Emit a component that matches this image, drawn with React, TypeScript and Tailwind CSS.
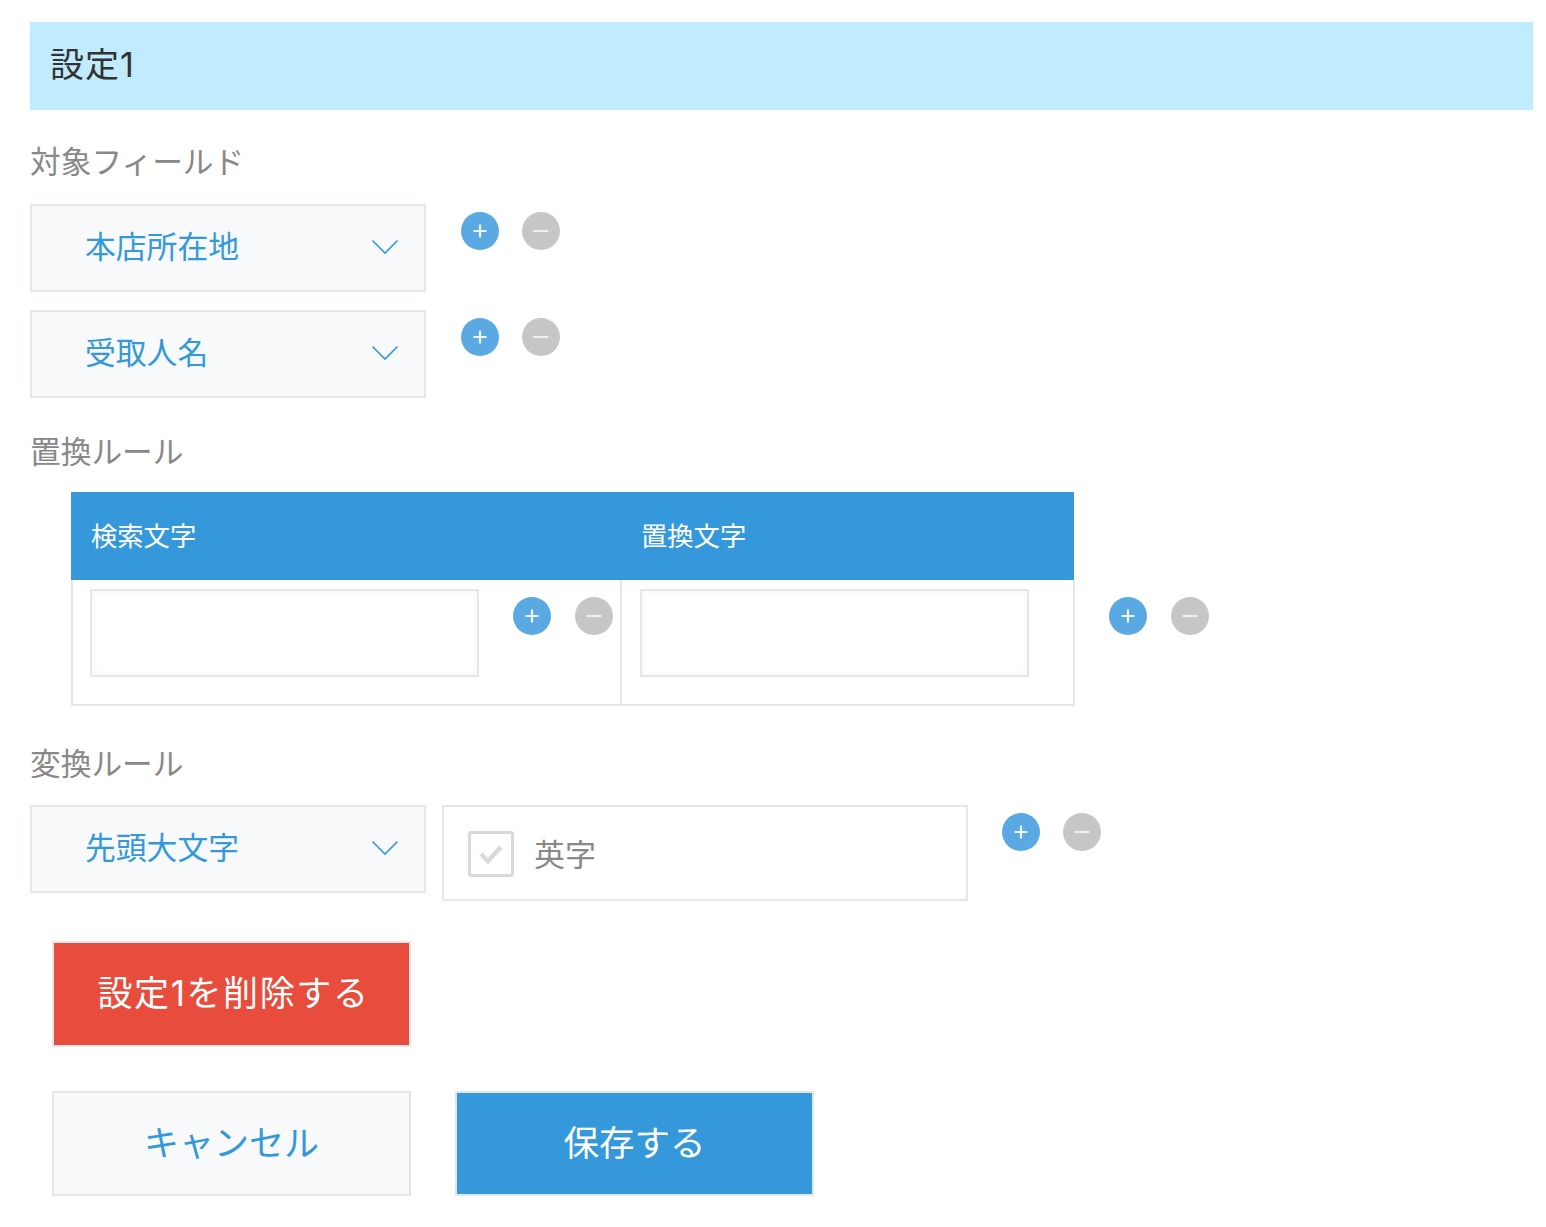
import React from "react";

const FONT = "[font-family:'Inter','Noto_Sans_CJK_JP',sans-serif]";

function Circles({ className = "" }: { className?: string }) {
  return (
    <div className={`flex ${className}`}>
      <svg width="38" height="38" viewBox="0 0 38 38">
        <circle cx="19" cy="19" r="19" fill="#5aa9e2" />
        <path d="M19 12.5v13M12.5 19h13" stroke="#eef6fc" strokeWidth="2.2" />
      </svg>
      <svg width="38" height="38" viewBox="0 0 38 38">
        <circle cx="19" cy="19" r="19" fill="#c6c6c6" />
        <path d="M11.5 19h15" stroke="#eeeeee" strokeWidth="2.2" />
      </svg>
    </div>
  );
}

function Select({ label }: { label: string }) {
  return (
    <div className="flex h-[88px] w-[396px] shrink-0 items-center justify-between border-2 border-[#e3e7e8] bg-[#f7f9fa] pl-[53px] pr-[25px]">
      <span className="mb-[2px] text-[30.8px] leading-none text-[#3498db]">{label}</span>
      <svg className="mb-[2px]" width="28" height="16" viewBox="0 0 28 16" fill="none">
        <path d="M1.5 1.5 14 14 26.5 1.5" stroke="#3498db" strokeWidth="1.6" />
      </svg>
    </div>
  );
}

function TextBox() {
  return (
    <div className="h-[88px] w-[389px] shrink-0 border-2 border-[#e3e7e8] bg-white shadow-[inset_0_0_8px_#f2f5f7]" />
  );
}

function FieldRow({ label }: { label: string }) {
  return (
    <div className="flex items-start">
      <Select label={label} />
      <Circles className="ml-[35px] mt-[8px] gap-[23px]" />
    </div>
  );
}

export default function App() {
  return (
    <div className={`min-h-[1227px] bg-white pl-[30px] pr-[13px] pt-[22px] ${FONT}`}>
      <div className="flex h-[88px] items-center bg-[#c1ebff] pb-[2px] pl-[20px] text-[34px] leading-none tracking-[1px] text-[#333333]">
        設定1
      </div>

      <div className="mb-[27px] mt-[37px] text-[30.7px] leading-[30px] text-[#888888]">対象フィールド</div>
      <div className="flex flex-col gap-[18px]">
        <FieldRow label="本店所在地" />
        <FieldRow label="受取人名" />
      </div>

      <div className="mb-[25px] mt-[39px] text-[30.7px] leading-[30px] text-[#888888]">置換ルール</div>
      <div className="ml-[41px] flex items-start">
        <div className="w-[1004px] shrink-0">
          <div className="mr-[1px] flex h-[88px] items-center bg-[#3498db] pt-[2px] text-[26.3px] leading-none text-white">
            <div className="w-[550px] pl-[20px]">検索文字</div>
            <div className="pl-[20px]">置換文字</div>
          </div>
          <div className="flex h-[126px] border-2 border-t-0 border-[#e3e7e8]">
            <div className="flex w-[549px] items-start border-r-2 border-[#e3e7e8] pl-[17px] pt-[9px]">
              <TextBox />
              <Circles className="ml-[34px] mt-[8px] gap-[24px]" />
            </div>
            <div className="pl-[18px] pt-[9px]">
              <TextBox />
            </div>
          </div>
        </div>
        <Circles className="ml-[34px] mt-[105px] gap-[24px]" />
      </div>

      <div className="mb-[26px] mt-[43px] text-[30.7px] leading-[30px] text-[#888888]">変換ルール</div>
      <div className="flex items-start">
        <Select label="先頭大文字" />
        <div className="ml-[16px] flex h-[96px] w-[526px] items-center border-2 border-[#e3e7e8] bg-white pl-[24px]">
          <div className="mt-[2px] flex h-[46px] w-[46px] items-center justify-center rounded-[3px] border-[3px] border-[#d9d9d9]">
            <svg width="26" height="22" viewBox="0 0 26 22" fill="none">
              <path d="M3 11l7 7L23 4" stroke="#d9d9d9" strokeWidth="4.5" />
            </svg>
          </div>
          <span className="ml-[20px] mt-[2px] text-[31px] leading-none text-[#888888]">英字</span>
        </div>
        <Circles className="ml-[34px] mt-[8px] gap-[23px]" />
      </div>

      <div className="ml-[22px] mt-[40px] flex h-[106px] w-[359px] items-center justify-center border-2 border-[#e3e7e8] bg-[#e74c3c] pb-[2px] pl-[4px] text-[35px] leading-none tracking-[1.6px] text-white">
        設定1を削除する
      </div>

      <div className="ml-[22px] mt-[44px] flex gap-[44px]">
        <div className="flex h-[105px] w-[359px] items-center justify-center border-2 border-[#e3e7e8] bg-[#f7f9fa] text-[35px] leading-none text-[#3498db]">
          キャンセル
        </div>
        <div className="flex h-[105px] w-[359px] items-center justify-center border-2 border-[#e3e7e8] bg-[#3498db] text-[35.5px] leading-none text-white">
          保存する
        </div>
      </div>
    </div>
  );
}
